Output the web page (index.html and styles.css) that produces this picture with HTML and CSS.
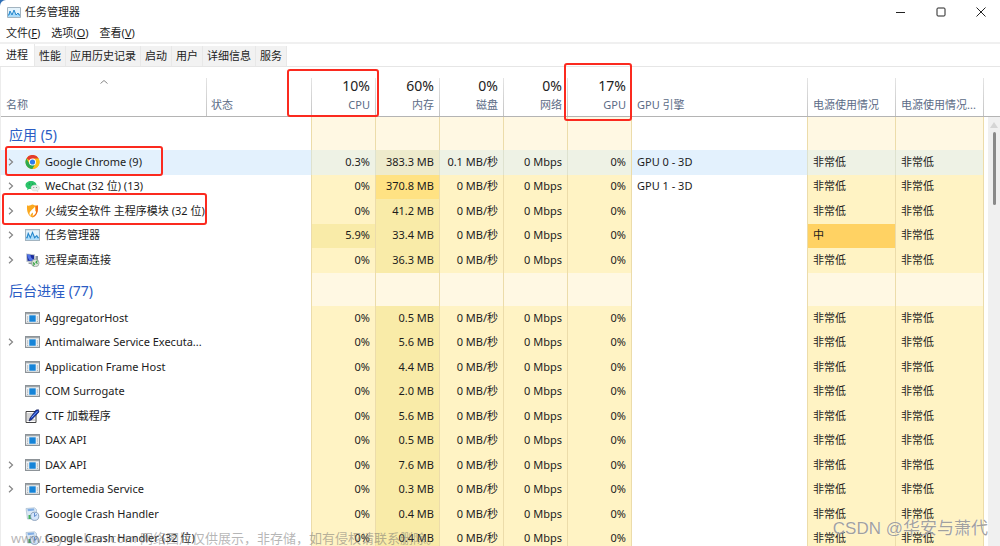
FILE: index.html
```
<!DOCTYPE html>
<html lang="zh-CN">
<head>
<meta charset="utf-8">
<title>任务管理器</title>
<link rel="stylesheet" href="styles.css">
</head>
<body>
<svg class="defs" aria-hidden="true">
  <symbol id="monitor" viewBox="0 0 14 11"><path fill="#e4f3fc" stroke="#a3b4c0" d="M.5.5h13v10H.5z"/><path fill="#a9dbfa" d="M1 7l2-3 2 4 2-5 2 5 2-2 2 1v3H1z"/><path fill="none" stroke="#2586cb" d="M1 8h1l1-4 2 4 2-5 2 5 2-2 1 2h1"/></symbol>
  <symbol id="chrome" viewBox="0 0 14 14"><circle cx="7" cy="7" r="7" fill="#fbc116"/><path fill="#e33b2e" d="M7 7L.9 3.5A7 7 0 0 1 13.1 3.5z"/><path fill="#2da94f" d="M.9 3.5A7 7 0 0 0 7 14l3-5.200L7 7 4 8.800z"/><path fill="#fbc116" d="M7 3.500h6.100A7 7 0 0 1 7 14l3-5.200z"/><circle cx="7" cy="7" r="3.500" fill="#fff"/><circle cx="7" cy="7" r="2.600" fill="#2f7de9"/></symbol>
  <symbol id="wechat" viewBox="0 0 14 14"><path fill="#2bc46a" d="M5.500 2C2.300 2 0 3.800 0 6.200c0 1.400.8 2.500 2 3.200L1.500 11l2-1h2C8.800 10 11 8.500 11 6.200S8.700 2 5.500 2z"/><path fill="#e9eeeb" stroke="#c5d1ca" stroke-width=".4" d="M9.500 6C7 6 5.500 7.300 5.500 9s1.700 3 4 3l1.500-.1 1.500.8-.3-1.300C13.300 10.900 14 10 14 9c0-1.700-1.900-3-4.500-3z"/><circle cx="3.800" cy="5" r=".6" fill="#147b3e"/><circle cx="7.200" cy="5" r=".6" fill="#147b3e"/><circle cx="8.300" cy="8.500" r=".5" fill="#777"/><circle cx="11" cy="8.500" r=".5" fill="#777"/></symbol>
  <symbol id="shield" viewBox="0 0 14 14"><path fill="#fba91f" d="M1.500 1.500C4 2 5.500 1 7 .5c1.500.5 3 1.500 5.500 1 .3 6-1 10-5.500 12C2.500 11.500 1.200 7.500 1.500 1.500z"/><path fill="#f36b18" d="M10 1.700l2.500-.2c.3 6-1 10-5.500 12 3.500-3.500 4.500-6.300 3-11.800z"/><path fill="#fff" d="M9 2.500c-.5 2.500-4.800 4-5 7 0 1 .3 1.700 1 2.500 0-1.800 1-2.600 2.300-3.500.3 1 .2 2-.3 3.500C9.500 11 11 9 10.500 6.800l-1 1C9.800 6 9.800 4 9 2.500z"/></symbol>
  <symbol id="remote" viewBox="0 0 14 14"><path fill="#bcc4cc" d="M.5.5l9 .8v8L1 9z"/><path fill="#1b2c9c" d="M1.500 1.500l7 .7v6L2 7.700z"/><path fill="#5275e8" d="M1.500 1.500l3.500.3c0 2 1 4 3.500 5v1.400l-4-.4C3 6.500 2 4 1.500 1.500z"/><path fill="#8b949d" d="M3 9.500h4v2l-4-.8zM10 3h2.500v5H10z"/><circle cx="9.800" cy="10" r="3.800" fill="#dce4dc" stroke="#7f8c86" stroke-width=".6"/><path fill="none" stroke="#36a443" stroke-width="1.200" d="M7.500 9.500L9 11l-1.500 1.500M12 7.700L10.500 9.200l1.500 1.500"/></symbol>
  <symbol id="app" viewBox="0 0 14 11"><path fill="#f1f4f6" stroke="#8d9398" d="M.5.5h13v10H.5z"/><path fill="#8c9398" d="M1 1h12v1H1zM2 4h1v1H2zM2 6h1v1H2zM2 8h1v1H2zM11 4h1v1h-1zM11 6h1v1h-1zM11 8h1v1h-1z"/><path fill="#1684d8" d="M4 3h6v6H4z"/></symbol>
  <symbol id="pen" viewBox="0 0 14 14"><path fill="#fff" stroke="#444" d="M.5 2.500h10v11H.5z"/><path stroke="#555" stroke-dasharray="1 1" d="M2 5h7M2 7h6M2 9h5M2 11h7"/><path fill="#1838b5" stroke="#0c164b" stroke-width=".6" d="M10.500 1L13 .7l.5 2.300-7 7.500L3.500 12l1-3z"/><path stroke="#7aaafa" d="M6 8.500l6-6.300"/></symbol>
  <symbol id="crash" viewBox="0 0 14 14"><path fill="#dce9f5" stroke="#a3b7cb" stroke-width=".7" d="M.5 1.500L9 .8l2 1.700v9.500H2z"/><path fill="#82aee5" d="M2 2l6.500-.4.3 2-6.500.6z"/><path fill="#43b05c" d="M3 8h3v4H3z"/><circle cx="9.200" cy="9.300" r="4.100" fill="#d5e6fb" stroke="#748ead" stroke-width=".8"/><path fill="none" stroke="#638ed0" d="M9 6v3.500l2.500-2"/></symbol>
  <symbol id="arrow" viewBox="0 0 6 8"><path fill="none" stroke="#858585" stroke-width="1.200" d="M1 .8L4.500 4 1 7.200"/></symbol>
</svg>
<div class="window">
  <header class="titlebar">
    <svg class="title-icon"><use href="#monitor"/></svg>
    <h1 class="title">任务管理器</h1>
    <button class="caption" aria-label="最小化"><svg class="caption-icon" viewBox="0 0 10 10"><path d="M0 5.500h9"/></svg></button>
    <button class="caption" aria-label="最大化"><svg class="caption-icon" viewBox="0 0 10 10"><rect x="1" y="1" width="8" height="8" rx="1"/></svg></button>
    <button class="caption" aria-label="关闭"><svg class="caption-icon" viewBox="0 0 10 10"><path d="M.5.5l9 9M9.500.5l-9 9"/></svg></button>
  </header>
  <nav class="menu"><button>文件(<u>F</u>)</button><button>选项(<u>O</u>)</button><button>查看(<u>V</u>)</button></nav>
  <div class="tabs" role="tablist"><button class="tab active" role="tab" aria-selected="true">进程</button><button class="tab" role="tab">性能</button><button class="tab" role="tab">应用历史记录</button><button class="tab" role="tab">启动</button><button class="tab" role="tab">用户</button><button class="tab" role="tab">详细信息</button><button class="tab" role="tab">服务</button></div>
  <main class="panel">
    <table class="processes">
      <colgroup><col class="c-name"><col class="c-status"><col class="c-num" span="5"><col class="c-engine"><col class="c-power" span="2"><col class="c-end"></colgroup>
      <thead>
        <tr><th class="name-head"><svg class="sort" viewBox="0 0 8 4"><path d="M.5 3.500L4 .5l3.500 3"/></svg>名称</th><th>状态</th><th class="num"><b>10%</b>CPU</th><th class="num"><b>60%</b>内存</th><th class="num"><b>0%</b>磁盘</th><th class="num"><b>0%</b>网络</th><th class="num"><b>17%</b>GPU</th><th class="plain">GPU 引擎</th><th>电源使用情况</th><th>电源使用情况...</th><th></th></tr>
      </thead>
      <tbody>
        <tr class="group"><th colspan="2">应用 (5)</th><td></td><td></td><td></td><td></td><td></td><td></td><td></td><td></td><td></td></tr>
        <tr class="selected"><td><div class="proc"><svg class="arrow"><use href="#arrow"/></svg><svg class="icon"><use href="#chrome"/></svg>Google Chrome (9)</div></td><td></td><td>0.3%</td><td>383.3 MB</td><td>0.1 MB/秒</td><td>0 Mbps</td><td>0%</td><td>GPU 0 - 3D</td><td>非常低</td><td>非常低</td><td></td></tr>
        <tr><td><div class="proc"><svg class="arrow"><use href="#arrow"/></svg><svg class="icon"><use href="#wechat"/></svg>WeChat (32 位) (13)</div></td><td></td><td>0%</td><td class="warm">370.8 MB</td><td>0 MB/秒</td><td>0 Mbps</td><td>0%</td><td>GPU 1 - 3D</td><td>非常低</td><td>非常低</td><td></td></tr>
        <tr><td><div class="proc"><svg class="arrow"><use href="#arrow"/></svg><svg class="icon"><use href="#shield"/></svg>火绒安全软件 主程序模块 (32 位)</div></td><td></td><td>0%</td><td>41.2 MB</td><td>0 MB/秒</td><td>0 Mbps</td><td>0%</td><td></td><td>非常低</td><td>非常低</td><td></td></tr>
        <tr><td><div class="proc"><svg class="arrow"><use href="#arrow"/></svg><svg class="icon"><use href="#monitor"/></svg>任务管理器</div></td><td></td><td class="mild">5.9%</td><td>33.4 MB</td><td>0 MB/秒</td><td>0 Mbps</td><td>0%</td><td></td><td class="hot">中</td><td>非常低</td><td></td></tr>
        <tr><td><div class="proc"><svg class="arrow"><use href="#arrow"/></svg><svg class="icon"><use href="#remote"/></svg>远程桌面连接</div></td><td></td><td>0%</td><td>36.3 MB</td><td>0 MB/秒</td><td>0 Mbps</td><td>0%</td><td></td><td>非常低</td><td>非常低</td><td></td></tr>
      </tbody>
      <tbody>
        <tr class="group"><th colspan="2">后台进程 (77)</th><td></td><td></td><td></td><td></td><td></td><td></td><td></td><td></td><td></td></tr>
        <tr><td><div class="proc"><span class="arrow"></span><svg class="icon"><use href="#app"/></svg>AggregatorHost</div></td><td></td><td>0%</td><td>0.5 MB</td><td>0 MB/秒</td><td>0 Mbps</td><td>0%</td><td></td><td>非常低</td><td>非常低</td><td></td></tr>
        <tr><td><div class="proc"><svg class="arrow"><use href="#arrow"/></svg><svg class="icon"><use href="#app"/></svg>Antimalware Service Executa...</div></td><td></td><td>0%</td><td>5.6 MB</td><td>0 MB/秒</td><td>0 Mbps</td><td>0%</td><td></td><td>非常低</td><td>非常低</td><td></td></tr>
        <tr><td><div class="proc"><span class="arrow"></span><svg class="icon"><use href="#app"/></svg>Application Frame Host</div></td><td></td><td>0%</td><td>4.4 MB</td><td>0 MB/秒</td><td>0 Mbps</td><td>0%</td><td></td><td>非常低</td><td>非常低</td><td></td></tr>
        <tr><td><div class="proc"><span class="arrow"></span><svg class="icon"><use href="#app"/></svg>COM Surrogate</div></td><td></td><td>0%</td><td>2.0 MB</td><td>0 MB/秒</td><td>0 Mbps</td><td>0%</td><td></td><td>非常低</td><td>非常低</td><td></td></tr>
        <tr><td><div class="proc"><span class="arrow"></span><svg class="icon"><use href="#pen"/></svg>CTF 加载程序</div></td><td></td><td>0%</td><td>5.6 MB</td><td>0 MB/秒</td><td>0 Mbps</td><td>0%</td><td></td><td>非常低</td><td>非常低</td><td></td></tr>
        <tr><td><div class="proc"><span class="arrow"></span><svg class="icon"><use href="#app"/></svg>DAX API</div></td><td></td><td>0%</td><td>0.5 MB</td><td>0 MB/秒</td><td>0 Mbps</td><td>0%</td><td></td><td>非常低</td><td>非常低</td><td></td></tr>
        <tr><td><div class="proc"><svg class="arrow"><use href="#arrow"/></svg><svg class="icon"><use href="#app"/></svg>DAX API</div></td><td></td><td>0%</td><td>7.6 MB</td><td>0 MB/秒</td><td>0 Mbps</td><td>0%</td><td></td><td>非常低</td><td>非常低</td><td></td></tr>
        <tr><td><div class="proc"><svg class="arrow"><use href="#arrow"/></svg><svg class="icon"><use href="#app"/></svg>Fortemedia Service</div></td><td></td><td>0%</td><td>0.3 MB</td><td>0 MB/秒</td><td>0 Mbps</td><td>0%</td><td></td><td>非常低</td><td>非常低</td><td></td></tr>
        <tr><td><div class="proc"><span class="arrow"></span><svg class="icon"><use href="#crash"/></svg>Google Crash Handler</div></td><td></td><td>0%</td><td>0.4 MB</td><td>0 MB/秒</td><td>0 Mbps</td><td>0%</td><td></td><td>非常低</td><td>非常低</td><td></td></tr>
        <tr><td><div class="proc"><span class="arrow"></span><svg class="icon"><use href="#crash"/></svg>Google Crash Handler (32 位)</div></td><td></td><td>0%</td><td>0.4 MB</td><td>0 MB/秒</td><td>0 Mbps</td><td>0%</td><td></td><td>非常低</td><td>非常低</td><td></td></tr>
      </tbody>
    </table>
    <div class="gutter"><div class="gutter-head"></div><div class="track"><svg class="up" viewBox="0 0 8 6"><path d="M4 0l4 6H0z"/></svg><div class="thumb"></div></div></div>
  </main>
  <div class="mark mark-cpu"></div>
  <div class="mark mark-gpu"></div>
  <div class="mark mark-chrome"></div>
  <div class="mark mark-security"></div>
  <p class="watermark site">www.toymoban.com 网络图片仅供展示，非存储，如有侵权请联系删除。</p>
  <p class="watermark author">CSDN @华安与萧代</p>
</div>
</body>
</html>
```
FILE: styles.css
```
* { box-sizing: border-box; }
body {
  margin: 0;
  background: #2f6fb5;
  color: #1c1c1c;
  font: 11px/16px "Noto Sans", "Noto Sans CJK SC", sans-serif;
}
button { margin: 0; padding: 0; border: 0; background: none; color: inherit; font: inherit; }
.defs { display: none; }
.window {
  position: relative;
  height: 100vh;
  overflow: hidden;
  display: flex;
  flex-direction: column;
  background: #fff;
  border-radius: 6px 0 0 0;
}
.titlebar { flex: none; height: 24px; display: flex; align-items: center; gap: 2px; padding-left: 7px; }
.title-icon { width: 14px; height: 11px; margin-right: 2px; }
.title { flex: 1; margin: 0; font-size: 11px; font-weight: 400; }
.caption { width: 38px; height: 24px; display: flex; align-items: center; justify-content: center; }
.caption-icon { width: 10px; height: 10px; fill: none; stroke: #222; }
.menu { flex: none; height: 20px; display: flex; align-items: center; gap: 11px; padding: 0 6px; border-bottom: 2px solid #f0f0f0; }
.tabs { flex: none; height: 23px; display: flex; align-items: flex-end; border-bottom: 1px solid #e6e6e6; }
.tab { height: 20px; padding: 0 4px; background: #f2f2f2; border-right: 1px solid #e8e8e8; white-space: nowrap; }
.tab.active { height: 22px; padding: 0 6px; background: #fff; }
.panel { flex: 1; min-height: 0; display: flex; align-items: stretch; border-left: 1px solid #ececec; }
.processes { flex: 1; align-self: flex-start; width: 0; min-width: 0; table-layout: fixed; border-collapse: separate; border-spacing: 0; }
.c-name { width: 205px; }
.c-status { width: 105px; }
.c-num { width: 64px; }
.c-power { width: 88px; }
.c-end { width: 5px; }
th, td { padding: 0 5px; text-align: left; font-weight: 400; white-space: nowrap; }
thead th {
  height: 50px;
  padding-bottom: 3px;
  vertical-align: bottom;
  color: #5b6b86;
  border-bottom: 1px solid #b4b4b4;
  background: linear-gradient(#e4e4e4, #c4c4c4) left bottom / 1px 38px no-repeat;
}
thead th:nth-child(n+8) { padding-left: 6px; padding-right: 0; }
thead th:last-child { padding: 0; }
thead .name-head, thead .plain { background: none; }
.num b { display: block; margin-bottom: 2px; color: #222; font-size: 14px; font-weight: 400; line-height: 18px; }
thead .num { text-align: right; }
.sort { display: block; width: 8px; height: 4px; margin: 0 auto 13px; fill: none; stroke: #888; }
tbody td { height: 24px; padding-bottom: 2px; }
tbody td:last-child { padding: 0; }
tbody tr:nth-child(even) td { height: 25px; }
td:nth-child(n+3):nth-child(-n+7) { text-align: right; background: #fff3c4; border-left: 1px solid #ecdcaa; }
td:nth-child(4) { background: #f9eba8; }
td:nth-child(n+3):nth-child(-n+7):nth-child(4) { background: #f9eba8; }
td:nth-child(8) { border-left: 1px solid #ecdcaa; }
td:nth-child(9), td:nth-child(10) { background: #fff3c4; border-left: 1px solid #ecdcaa; }
td:nth-child(11) { border-left: 1px solid #ecdcaa; }
.group th { height: 33px; padding: 3px 8px 0; color: #2b5cc4; font-size: 14px; }
tbody tr.group td { height: 33px; }
tbody .group td:nth-child(n):nth-child(n) { background: #fff8e3; border-left: 1px solid #ecdcaa; }
tbody .group td:nth-child(n):nth-child(7), tbody .group td:nth-child(n):nth-child(10) { background: #fff; }
tr.selected td { background: #e3f1fd; }
tbody tr.selected td:nth-child(n+3):nth-child(-n+7), tr.selected td:nth-child(9), tr.selected td:nth-child(10) { background: #eef2e5; border-color: #dee2cf; }
tbody tr.selected td:nth-child(n+3):nth-child(-n+7):nth-child(4) { background: #eeebcc; }
tbody tr.selected td:nth-child(3) { background: #ebf0db; }
tr.selected td:nth-child(11) { background: #fff; }
tbody tr td.warm:nth-child(n+3):nth-child(-n+7) { background: #ffe283; }
tbody tr td.mild:nth-child(n+3):nth-child(-n+7) { background: #f9eba8; }
tbody tr td.hot:nth-child(n) { background: #ffd263; }
.proc { display: flex; align-items: center; }
.arrow { flex: none; width: 6px; height: 8px; margin-left: 2px; margin-right: 11px; }
.icon { flex: none; width: 15px; height: 14px; margin-right: 5px; }
.gutter { flex: none; width: 12px; display: flex; flex-direction: column; }
.gutter-head { height: 50px; border-bottom: 1px solid #b4b4b4; }
.track { flex: 1; display: flex; flex-direction: column; align-items: center; background: #f0f0f0; }
.up { width: 8px; height: 6px; margin: 5px 0 4px; fill: #d5d5d5; }
.thumb { width: 3px; height: 73px; border-radius: 2px; background: #8a8a8a; }
.mark { position: absolute; border: 2px solid #fb2a1f; border-radius: 3px; }
.mark-cpu { left: 287px; top: 69px; width: 92px; height: 48px; }
.mark-gpu { left: 564px; top: 63px; width: 68px; height: 58px; }
.mark-chrome { left: 5px; top: 146px; width: 158px; height: 30px; }
.mark-security { left: 2px; top: 193px; width: 205px; height: 32px; }
.watermark { position: absolute; margin: 0; white-space: nowrap; }
.site { left: 11px; bottom: -2px; color: rgba(110, 110, 110, .5); font: 13px/20px "Noto Sans", "Noto Sans CJK SC", sans-serif; }
.author { right: 12px; bottom: 5px; color: rgba(130, 130, 130, .75); font: 17px/24px "Liberation Sans", "Noto Sans CJK SC", sans-serif; text-shadow: 0 0 1px #fff; }
```
